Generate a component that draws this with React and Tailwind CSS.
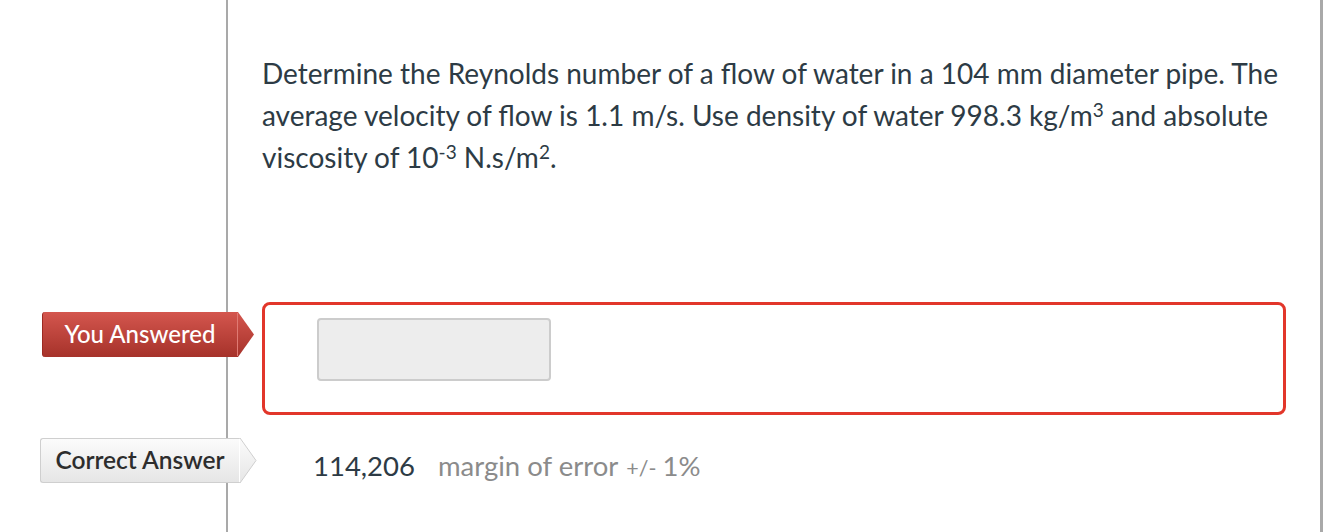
import React from 'react';

const font = { fontFamily: 'Lato, "Open Sans", sans-serif' };

// arrow-shaped label on the left gutter
const Badge = ({ label, variant }) => {
  const red = variant === 'red';
  return (
    <div className="flex h-[45px] mr-[-29px] relative z-10">
      <div
        className={
          red
            ? 'h-full flex items-center justify-center rounded-l-[3px] border-l border-[#9c2a22] bg-gradient-to-b from-[#d4564e] to-[#a6322a] text-white text-[24px] font-medium'
            : 'h-full flex items-center justify-center rounded-l-[3px] border border-r-0 border-[#cfcfcf] bg-gradient-to-b from-[#fbfbfb] to-[#e6e6e6] text-[#2d2d2d] text-[24.5px] font-semibold'
        }
        style={{ width: red ? 195 : 199 }}
      >
        <span className="mt-[-1px]">{label}</span>
      </div>
      <svg width="18" height="45" viewBox="0 0 18 45" className="block">
        <defs>
          <linearGradient id={'g' + variant} x1="0" y1="0" x2="0" y2="1">
            <stop offset="0" stopColor={red ? '#d4564e' : '#fbfbfb'} />
            <stop offset="1" stopColor={red ? '#a6322a' : '#e6e6e6'} />
          </linearGradient>
        </defs>
        <polygon
          points="0,0 1,0 17,22.5 1,45 0,45"
          fill={`url(#g${variant})`}
          stroke={red ? 'none' : '#cfcfcf'}
          strokeWidth="1"
        />
        <line x1="0.5" y1="1" x2="0.5" y2="44" stroke={red ? '#e07a73' : '#ffffff'} strokeWidth="1" />
      </svg>
    </div>
  );
};

export default function App() {
  return (
    <div className="w-[1330px] h-[532px] bg-white overflow-hidden" style={font}>
      <div className="grid grid-cols-[228px_1095px] grid-rows-[302px_auto_auto_1fr] h-full">
        {/* question */}
        <div className="border-r-2 border-[#a9a9a9]" />
        <div className="border-r-3 border-[#a9a9a9] px-[34px] pt-[52px]">
          <p className="text-[28px] leading-[42px] text-[#2d3b45]">
            Determine the Reynolds number of a flow of water in a 104 mm diameter pipe. The average velocity of flow is
            1.1 m/s. Use density of water 998.3 kg/m<sup className="text-[19px] leading-none">3</sup> and absolute viscosity of 10
            <sup className="text-[19px] leading-none">-3</sup> N.s/m<sup className="text-[19px] leading-none">2</sup>.
          </p>
        </div>

        {/* your answer */}
        <div className="border-r-2 border-[#a9a9a9] flex justify-end items-start pt-[10px]">
          <Badge label="You Answered" variant="red" />
        </div>
        <div className="border-r-3 border-[#a9a9a9] px-[34px]">
          <div className="border-3 border-[#e2362a] rounded-[8px] pl-[52px] pt-[13px] pb-[31px]">
            <div className="w-[234px] h-[63px] bg-[#ededed] border-2 border-[#cccccc] rounded-[4px]" />
          </div>
        </div>

        {/* correct answer */}
        <div className="border-r-2 border-[#a9a9a9] flex justify-end items-start pt-[23px]">
          <div className="mr-[-2px]">
            <Badge label="Correct Answer" variant="gray" />
          </div>
        </div>
        <div className="border-r-3 border-[#a9a9a9] pl-[85px] pt-[32px]">
          <p className="text-[27.5px] leading-[38px] flex items-baseline">
            <span className="text-[#2d3b45]">114,206</span>
            <span className="ml-[23px] text-[#8b8b8b]">margin of error</span>
            <span className="ml-[8px] text-[21.5px] text-[#8b8b8b]">+/-</span>
            <span className="ml-[6px] text-[#8b8b8b]">1%</span>
          </p>
        </div>

        <div className="border-r-2 border-[#a9a9a9]" />
        <div className="border-r-3 border-[#a9a9a9]" />
      </div>
    </div>
  );
}
